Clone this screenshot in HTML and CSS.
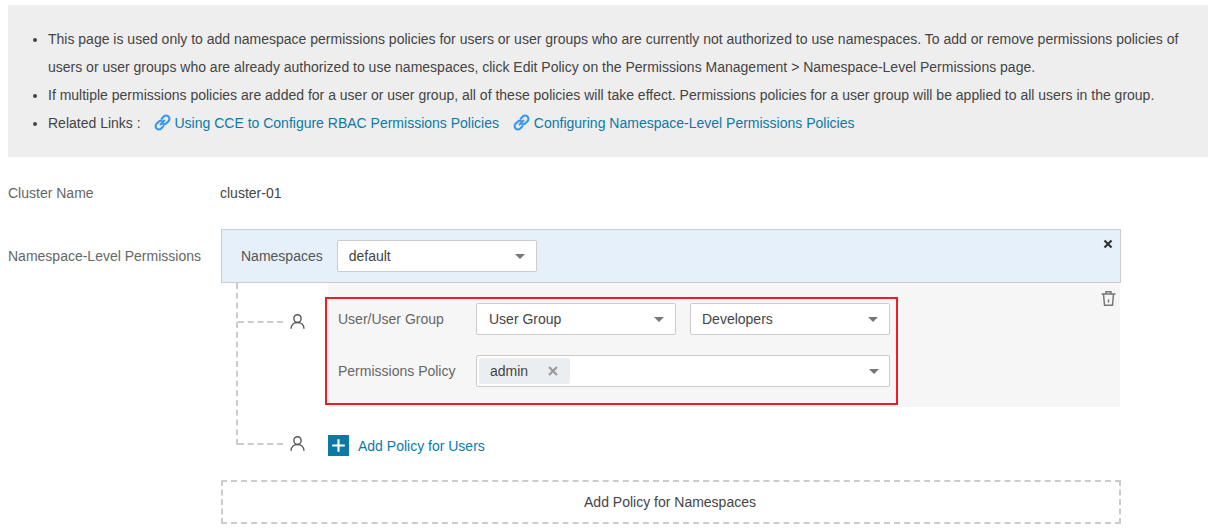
FILE: index.html
```html
<!DOCTYPE html>
<html lang="en">
<head>
<meta charset="utf-8">
<title>Add Namespace Permissions</title>
<link rel="stylesheet" href="styles.css">
</head>
<body>
<section class="notice">
  <ul class="notice-list">
    <li>This page is used only to add namespace permissions policies for users or user groups who are currently not authorized to use namespaces. To add or remove permissions policies of users or user groups who are already authorized to use namespaces, click Edit Policy on the Permissions Management &gt; Namespace-Level Permissions page.</li>
    <li>If multiple permissions policies are added for a user or user group, all of these policies will take effect. Permissions policies for a user group will be applied to all users in the group.</li>
    <li class="links"><span class="links-label">Related Links :</span>
      <a class="doc-link" href="#"><svg class="link-icon" viewBox="0 0 16 16"><path d="M6.2 9.8 9.8 6.2M7.2 4.4l2-2a2.9 2.9 0 0 1 4.4 4.4l-2 2a2.9 2.9 0 0 1-2.9.7M8.8 11.6l-2 2a2.9 2.9 0 0 1-4.4-4.4l2-2a2.9 2.9 0 0 1 2.9-.7"/></svg>Using CCE to Configure RBAC Permissions Policies</a>
      <a class="doc-link" href="#"><svg class="link-icon" viewBox="0 0 16 16"><path d="M6.2 9.8 9.8 6.2M7.2 4.4l2-2a2.9 2.9 0 0 1 4.4 4.4l-2 2a2.9 2.9 0 0 1-2.9.7M8.8 11.6l-2 2a2.9 2.9 0 0 1-4.4-4.4l2-2a2.9 2.9 0 0 1 2.9-.7"/></svg>Configuring Namespace-Level Permissions Policies</a>
    </li>
  </ul>
</section>

<div class="field cluster-field">
  <div class="field-label">Cluster Name</div>
  <div class="field-value">cluster-01</div>
</div>

<div class="field perm-field">
  <div class="field-label perm-label">Namespace-Level Permissions</div>
  <div class="perm-body">
    <div class="ns-head">
      <span class="ns-label">Namespaces</span>
      <div class="select ns-select"><span>default</span><i class="caret"></i></div>
      <svg class="close-icon" viewBox="0 0 10 10"><path d="M1.5 1.5l7 7M8.5 1.5l-7 7"/></svg>
    </div>
    <div class="tree">
      <div class="tree-row">
        <span class="connector first"></span>
        <svg class="person first" viewBox="0 0 15 15"><ellipse cx="7.5" cy="4.6" rx="3.6" ry="3.9"/><path d="M1 14.8c0-3.9 2.8-6.3 6.5-6.3s6.500 2.400 6.500 6.300"/></svg>
        <div class="policy-block">
          <div class="highlight">
            <div class="form-row">
              <span class="form-label">User/User Group</span>
              <div class="select type-select"><span>User Group</span><i class="caret"></i></div>
              <div class="select group-select"><span>Developers</span><i class="caret"></i></div>
            </div>
            <div class="form-row">
              <span class="form-label">Permissions Policy</span>
              <div class="select multi-select">
                <span class="tag">admin<svg class="tag-x" viewBox="0 0 10 10"><path d="M1 1l8 8M9 1l-8 8"/></svg></span>
                <i class="caret"></i>
              </div>
            </div>
          </div>
          <svg class="trash" viewBox="0 0 15 15"><path d="M0.500 3h14M5 3V0.800h5V3M2.500 3l1 11.300h8l1-11.300"/><path class="trash-mark" d="M7.500 8.500v3"/></svg>
        </div>
      </div>
      <div class="tree-row add-row">
        <span class="connector last"></span>
        <svg class="person last" viewBox="0 0 15 15"><ellipse cx="7.5" cy="4.6" rx="3.6" ry="3.9"/><path d="M1 14.8c0-3.9 2.8-6.3 6.5-6.3s6.500 2.400 6.500 6.300"/></svg>
        <a class="add-user" href="#"><span class="plus"><svg viewBox="0 0 20 20"><path d="M10 4v12M4 10h12"/></svg></span>Add Policy for Users</a>
      </div>
    </div>
    <div class="add-ns">Add Policy for Namespaces</div>
  </div>
</div>
</body>
</html>
```
FILE: styles.css
```css
* { box-sizing: border-box; }
html, body { margin: 0; padding: 0; background: #fff; }
body { font-family: "Liberation Sans", Arial, sans-serif; font-size: 14px; color: #333; overflow: hidden; height: 532px; }
a { color: #0a7ba6; text-decoration: none; }

.notice { margin: 5px 3px 0 8px; padding: 20px 20px 20px 0; background: #eee; color: #444; line-height: 28px; }
.notice-list { margin: 0; padding: 0 0 0 40px; }
.links-label { margin-right: 9px; }
.doc-link { margin-right: 10px; }
.link-icon { width: 17px; height: 17px; margin-right: 4px; vertical-align: -3px; fill: none; stroke: #3a97ee; stroke-width: 2; stroke-linecap: round; }

.field { display: flex; margin-left: 8px; color: #666; }
.field-label { width: 212px; flex: none; }
.cluster-field { margin-top: 28px; line-height: 16px; }
.field-value { color: #444; line-height: 16px; }
.perm-field { margin-top: 28px; }
.perm-field .field-label { width: 213px; }
.perm-label { padding-top: 19px; line-height: 16px; }
.perm-body { width: 900px; }

.ns-head { display: flex; align-items: center; height: 54px; padding: 0 7px 0 19px; background: #e6f0fa; border: 1px solid #c8ccd0; }
.ns-label { color: #555; margin-right: 14px; }
.select { display: flex; align-items: center; justify-content: space-between; height: 32px; padding: 0 11px 0 12px; background: #fff; border: 1px solid #ccc; border-radius: 2px; color: #444; }
.ns-select { width: 200px; padding-left: 11px; }
.caret { width: 0; height: 0; border-left: 5px solid transparent; border-right: 5px solid transparent; border-top: 5px solid #777; }
.close-icon { width: 10px; height: 10px; margin-left: auto; margin-bottom: 24px; fill: none; stroke: #333; stroke-width: 2.2; }

.tree { margin-left: 15px; width: 885px; border-left: 2px dashed #ccc; height: 162px; }
.tree-row { display: flex; align-items: flex-start; }
.connector { width: 45px; flex: none; border-top: 2px dashed #ccc; }
.connector.first { margin-top: 38px; }
.person { width: 15px; height: 15px; flex: none; margin-left: 7px; fill: none; stroke: #555; stroke-width: 1.4; }
.person.first { margin-top: 31px; }
.policy-block { display: flex; align-items: flex-start; width: 792px; height: 124px; margin-left: 23px; background: #f6f6f6; }
.highlight { width: 573px; height: 108px; margin: 14px 0 0 -3px; padding: 4px 6px 0 11px; border: 2px solid #ee1c25; }
.form-row { display: flex; align-items: center; height: 32px; margin-bottom: 20px; }
.form-label { width: 138px; flex: none; color: #666; }
.type-select { width: 200px; margin-right: 14px; }
.group-select { width: 200px; padding-left: 11px; }
.multi-select { width: 415px; padding-left: 2px; padding-right: 10px; }
.tag { display: flex; align-items: center; justify-content: space-between; width: 91px; height: 26px; padding: 0 12px 0 11px; background: #ebeef1; border-radius: 2px; }
.tag-x { width: 10px; height: 10px; fill: none; stroke: #999; stroke-width: 2.2; }
.trash { width: 15px; height: 15px; margin: 8px 4px 0 auto; fill: none; stroke: #777; stroke-width: 1.5; }

.add-row { height: 38px; }
.connector.last { margin-top: 36px; }
.person.last { margin-top: 29px; }
.add-user { display: flex; align-items: center; margin: 28px 0 0 23px; line-height: 20px; }
.plus { display: block; width: 21px; height: 21px; margin-right: 9px; background: #0a7aa5; }
.plus svg { display: block; width: 21px; height: 21px; fill: none; stroke: #fff; stroke-width: 2; }

.add-ns { display: flex; align-items: center; justify-content: center; height: 44px; margin-top: 35px; padding-right: 2px; border: 2px dashed #ccc; color: #444; }
```
